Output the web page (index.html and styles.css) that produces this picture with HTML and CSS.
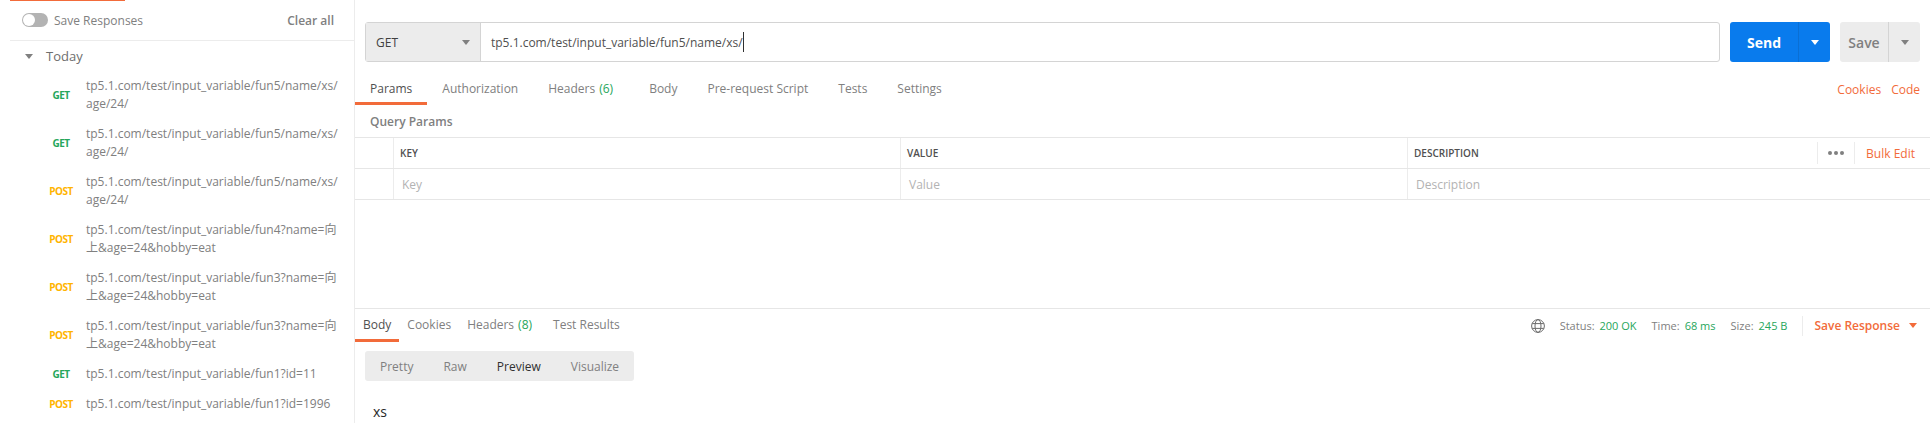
FILE: index.html
```html
<!DOCTYPE html>
<html lang="en">
<head>
<meta charset="utf-8">
<title>Postman</title>
<link rel="stylesheet" href="styles.css">
</head>
<body>
<div class="app">
  <aside class="sidebar">
    <div class="side-accent"></div>
    <div class="side-head">
      <div class="save-toggle"><span class="toggle"><span class="knob"></span></span><span>Save Responses</span></div>
      <span class="clear">Clear all</span>
    </div>
    <div class="today"><span class="caret caret-grey"></span><span>Today</span></div>
    <ul class="history">
      <li class="hist"><span class="verb get">GET</span><span class="hist-url">tp5.1.com/test/input_variable/fun5/name/xs/<br>age/24/</span></li>
      <li class="hist"><span class="verb get">GET</span><span class="hist-url">tp5.1.com/test/input_variable/fun5/name/xs/<br>age/24/</span></li>
      <li class="hist"><span class="verb post">POST</span><span class="hist-url">tp5.1.com/test/input_variable/fun5/name/xs/<br>age/24/</span></li>
      <li class="hist"><span class="verb post">POST</span><span class="hist-url">tp5.1.com/test/input_variable/fun4?name=向<br>上&amp;age=24&amp;hobby=eat</span></li>
      <li class="hist"><span class="verb post">POST</span><span class="hist-url">tp5.1.com/test/input_variable/fun3?name=向<br>上&amp;age=24&amp;hobby=eat</span></li>
      <li class="hist"><span class="verb post">POST</span><span class="hist-url">tp5.1.com/test/input_variable/fun3?name=向<br>上&amp;age=24&amp;hobby=eat</span></li>
      <li class="hist hist-one"><span class="verb get">GET</span><span class="hist-url">tp5.1.com/test/input_variable/fun1?id=11</span></li>
      <li class="hist hist-one"><span class="verb post">POST</span><span class="hist-url">tp5.1.com/test/input_variable/fun1?id=1996</span></li>
    </ul>
  </aside>
  <main class="main">
    <section class="request">
      <div class="url-row">
        <div class="url-group">
          <div class="method"><span>GET</span><span class="caret caret-grey"></span></div>
          <div class="url">tp5.1.com/test/input_variable/fun5/name/xs/<span class="cursor"></span></div>
        </div>
        <div class="split send"><span class="split-main">Send</span><span class="split-arrow"><span class="caret caret-white"></span></span></div>
        <div class="split save"><span class="split-main">Save</span><span class="split-arrow"><span class="caret caret-grey"></span></span></div>
      </div>
      <div class="req-tabs">
        <nav class="tabs">
          <span class="tab tab-active">Params</span>
          <span class="tab">Authorization</span>
          <span class="tab">Headers<em class="count">(6)</em></span>
          <span class="tab">Body</span>
          <span class="tab">Pre-request Script</span>
          <span class="tab">Tests</span>
          <span class="tab">Settings</span>
        </nav>
        <div class="links"><span>Cookies</span><span>Code</span></div>
      </div>
      <div class="query-title">Query Params</div>
      <div class="grid grid-head">
        <div class="cell-check"></div>
        <div class="cell">KEY</div>
        <div class="cell">VALUE</div>
        <div class="cell cell-desc">
          <span>DESCRIPTION</span>
          <div class="head-tools">
            <span class="dots"><i></i><i></i><i></i></span>
            <span class="bulk">Bulk Edit</span>
          </div>
        </div>
      </div>
      <div class="grid grid-row">
        <div class="cell-check"></div>
        <div class="cell">Key</div>
        <div class="cell">Value</div>
        <div class="cell">Description</div>
      </div>
    </section>
    <section class="response">
      <div class="res-bar">
        <nav class="tabs res-tabs">
          <span class="tab tab-active">Body</span>
          <span class="tab">Cookies</span>
          <span class="tab">Headers<em class="count">(8)</em></span>
          <span class="tab">Test Results</span>
        </nav>
        <div class="res-meta">
          <svg class="globe" width="14" height="14" viewBox="0 0 14 14" fill="none" stroke="#6b6b6b" stroke-width="1"><circle cx="7" cy="7" r="6.4"/><ellipse cx="7" cy="7" rx="3" ry="6.4"/><path d="M1.2 4.6h11.6M1.2 9.4h11.6"/></svg>
          <span class="stat">Status:<b>200 OK</b></span>
          <span class="stat">Time:<b>68 ms</b></span>
          <span class="stat">Size:<b>245 B</b></span>
          <span class="save-res">Save Response<span class="caret caret-orange"></span></span>
        </div>
      </div>
      <div class="segments">
        <span>Pretty</span><span>Raw</span><span class="seg-on">Preview</span><span>Visualize</span>
      </div>
      <div class="res-body">xs</div>
    </section>
  </main>
</div>
</body>
</html>
```
FILE: styles.css
```css
* { box-sizing: border-box; }
html, body { margin: 0; height: 100%; overflow: hidden; background: #fff; }
body { font-family: "Open Sans", "Noto Sans CJK SC", sans-serif; font-size: 12px; color: #808080; }
ul { list-style: none; margin: 0; padding: 0; }
em { font-style: normal; }
b { font-weight: 400; }

.app { display: flex; height: 423px; }
.sidebar { width: 355px; flex: none; border-right: 1px solid #ececec; position: relative; overflow: hidden; }
.side-accent { position: absolute; left: 10px; top: 0; width: 115px; height: 1px; background: #f26b3a; }
.side-head { height: 41px; margin-left: 10px; padding: 0 20px 0 12px; display: flex; align-items: center; justify-content: space-between; border-bottom: 1px solid #ececec; }
.save-toggle { display: flex; align-items: center; gap: 6px; }
.toggle { width: 26px; height: 14px; border-radius: 7px; background: #b3b3b3; display: block; padding: 1px; }
.knob { display: block; width: 12px; height: 12px; border-radius: 50%; background: #fff; }
.clear { font-weight: 600; }
.today { height: 30px; display: flex; align-items: center; gap: 13px; padding-left: 25px; font-size: 13px; color: #6e6e6e; }

.caret { display: block; width: 0; height: 0; border-left: 4px solid transparent; border-right: 4px solid transparent; border-top: 5px solid #808080; }
.caret-white { border-top-color: #fff; }
.caret-orange { border-top-color: #f26b3a; }

.hist { display: flex; align-items: center; padding: 6px 0; min-height: 48px; line-height: 18px; }
.hist-one { min-height: 30px; }
.verb { width: 42px; flex: none; margin: 0 4px 0 40px; text-align: center; font-size: 10px; font-weight: 700; letter-spacing: -0.5px; line-height: 18px; }
.get { color: #26a65b; }
.post { color: #ffb400; }
.hist-url { white-space: nowrap; }

.main { flex: 1; min-width: 0; display: flex; flex-direction: column; }
.request { height: 309px; border-bottom: 1px solid #e6e6e6; }
.url-row { display: flex; padding: 22px 10px 0 10px; height: 62px; }
.url-group { flex: 1; display: flex; height: 40px; border: 1px solid #d4d4d4; border-radius: 3px; }
.method { width: 115px; flex: none; background: #ececec; border-right: 1px solid #d4d4d4; display: flex; align-items: center; justify-content: space-between; padding: 0 10px 0 10px; color: #404040; }
.url { flex: 1; display: flex; align-items: center; padding-left: 10px; color: #505050; }
.cursor { width: 1px; height: 20px; background: #303030; }
.split { display: flex; height: 40px; border-radius: 3px; margin-left: 10px; font-size: 14px; font-weight: 700; }
.split-main { display: flex; align-items: center; justify-content: center; }
.split-arrow { display: flex; align-items: center; justify-content: center; }
.send { width: 100px; background: #097bed; color: #fff; }
.send .split-main { width: 69px; border-right: 1px solid #0a6fd4; }
.send .split-arrow { flex: 1; }
.save { width: 80px; background: #ececec; color: #808080; font-weight: 600; }
.save .split-main { width: 49px; border-right: 1px solid #d4d4d4; }
.save .split-arrow { flex: 1; }

.req-tabs { display: flex; justify-content: space-between; height: 43px; padding-right: 10px; }
.tabs { display: flex; }
.tab { padding: 13px 15px 0; height: 43px; display: flex; align-items: center; white-space: pre; border-bottom: 3px solid transparent; }
.tab-active { color: #505050; border-bottom-color: #f26b3a; }
.count { color: #26a65b; margin: 0 6px 0 4px; }
.links { display: flex; gap: 10px; align-items: center; height: 40px; padding-top: 14px; color: #f26b3a; }
.query-title { height: 32px; padding-left: 15px; line-height: 34px; font-weight: 600; }

.grid { display: grid; grid-template-columns: 39px 507px 507px 1fr; border-top: 1px solid #e6e6e6; height: 31px; align-items: stretch; }
.cell-check { border-right: 1px solid #ececec; }
.cell { display: flex; align-items: center; padding-left: 6px; border-right: 1px solid #ececec; }
.cell:last-child { border-right: none; }
.grid-head .cell { font-size: 10px; font-weight: 600; color: #505050; }
.grid-row { height: 32px; border-bottom: 1px solid #e6e6e6; }
.grid-row .cell { color: #b3b3b3; padding-left: 8px; }
.cell-desc { justify-content: space-between; padding-right: 15px; }
.head-tools { display: flex; align-items: center; height: 100%; }
.dots { display: flex; gap: 2px; padding: 0 10px; height: 22px; align-items: center; border-left: 1px solid #ececec; border-right: 1px solid #ececec; }
.dots i { display: block; width: 4px; height: 4px; border-radius: 50%; background: #808080; }
.bulk { padding-left: 11px; color: #f26b3a; font-size: 12px; font-weight: 400; }

.res-bar { display: flex; justify-content: space-between; height: 33px; padding-right: 13px; }
.res-tabs .tab { height: 33px; padding: 0 8px; }
.res-tabs .count { margin-right: 5px; }
.res-meta { display: flex; align-items: center; height: 33px; font-size: 11px; }
.globe { margin-right: 15px; }
.stat { margin-right: 15px; }
.stat b { color: #26a65b; margin-left: 5px; }
.save-res { display: flex; align-items: center; gap: 9px; height: 20px; padding-left: 11px; border-left: 1px solid #ececec; color: #f26b3a; font-size: 12px; font-weight: 600; }

.segments { display: flex; align-items: center; gap: 30px; width: 269px; height: 30px; margin: 9px 0 0 10px; padding: 0 15px; background: #ececec; border-radius: 3px; }
.seg-on { color: #303030; }
.res-body { padding: 21px 0 0 18px; font-size: 14px; color: #282828; }
```
